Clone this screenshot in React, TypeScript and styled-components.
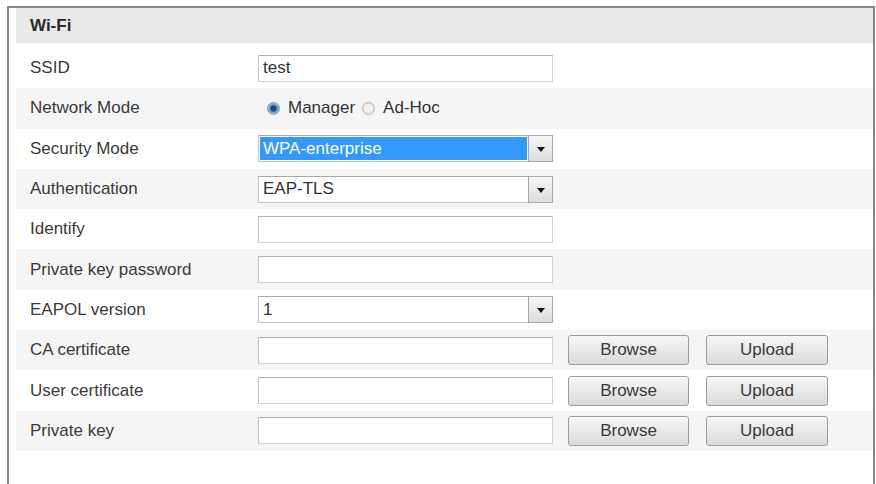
import React from "react";
import styled, { createGlobalStyle } from "styled-components";

const GlobalStyle = createGlobalStyle`
  html, body {
    margin: 0;
    padding: 0;
    background: #ffffff;
    overflow: hidden;
  }
  body {
    font-family: "Liberation Sans", Arial, sans-serif;
    color: #363636;
  }
`;

const Panel = styled.div`
  margin: 6px 1px 0 7px;
  min-height: 490px;
  border: 2px solid #868686;
  border-bottom: none;
  padding-left: 7px;
`;

const Header = styled.div`
  height: 35px;
  display: flex;
  align-items: center;
  padding-left: 14px;
  background: #e9e9e9;
  font-size: 17px;
  font-weight: bold;
  color: #2b2b2b;
`;

const Rows = styled.div`
  padding-top: 5px;
`;

const Row = styled.div<{ $shade: boolean }>`
  display: flex;
  align-items: center;
  height: 40.3px;
  background: ${(p) => (p.$shade ? "#f5f5f5" : "#ffffff")};
`;

const Label = styled.div`
  width: 242px;
  box-sizing: border-box;
  padding-left: 14px;
  font-size: 17px;
  color: #3a3a3a;
`;

const Field = styled.input`
  width: 295px;
  height: 27px;
  box-sizing: border-box;
  margin: 0;
  padding: 0 4px;
  border: 1px solid #d2d2d2;
  border-top-color: #b3b3b3;
  border-left-color: #c4c4c4;
  background: #ffffff;
  font-family: "Liberation Sans", Arial, sans-serif;
  font-size: 17px;
  color: #333;
  outline: none;
`;

const Select = styled.div`
  width: 295px;
  height: 27px;
  box-sizing: border-box;
  display: flex;
  border: 1px solid #c2c2c2;
  border-top-color: #a9a9a9;
  background: #ffffff;
`;

const SelectValue = styled.div<{ $highlight?: boolean }>`
  flex: 1;
  margin: 1px;
  padding-left: 3px;
  display: flex;
  align-items: center;
  font-size: 17px;
  background: ${(p) => (p.$highlight ? "#3399ff" : "transparent")};
  color: ${(p) => (p.$highlight ? "#ffffff" : "#333333")};
`;

const SelectArrow = styled.div`
  width: 25px;
  box-sizing: border-box;
  border: 1px solid #a8a8a8;
  margin: -1px -1px -1px 0;
  background: linear-gradient(#f8f8f8, #dcdcdc);
  display: flex;
  align-items: center;
  justify-content: center;

  &::after {
    content: "";
    border-left: 4px solid transparent;
    border-right: 4px solid transparent;
    border-top: 5px solid #111;
    margin-top: 2px;
  }
`;

const RadioGroup = styled.div`
  display: flex;
  align-items: center;
  padding-left: 9px;
  font-size: 17px;
  color: #333;
`;

const RadioDot = styled.span<{ $checked?: boolean }>`
  width: 13px;
  height: 13px;
  box-sizing: border-box;
  border-radius: 50%;
  border: 1px solid ${(p) => (p.$checked ? "#7f9bb3" : "#b9b9b9")};
  background: ${(p) =>
    p.$checked
      ? "radial-gradient(circle, #1e4a73 0 2.5px, #5d8fbb 3.5px, #b9d0e4 6px)"
      : "radial-gradient(circle, #f2f2f2 0 3px, #dcdcdc 6px)"};
  margin-right: 8px;
`;

const RadioText = styled.span`
  margin-right: 7px;
`;

const Button = styled.button<{ $gap: number; $width: number }>`
  width: ${(p) => p.$width}px;
  height: 30px;
  margin: 0 0 0 ${(p) => p.$gap}px;
  padding: 0;
  border: 1px solid #9c9c9c;
  border-radius: 3px;
  background: linear-gradient(#f7f7f7, #dadada);
  font-family: "Liberation Sans", Arial, sans-serif;
  font-size: 17px;
  color: #3a3a3a;
`;

type Control =
  | { kind: "text"; value?: string; files?: boolean }
  | { kind: "select"; value: string; highlight?: boolean }
  | { kind: "radio" };

const rows: { label: string; control: Control }[] = [
  { label: "SSID", control: { kind: "text", value: "test" } },
  { label: "Network Mode", control: { kind: "radio" } },
  {
    label: "Security Mode",
    control: { kind: "select", value: "WPA-enterprise", highlight: true },
  },
  { label: "Authentication", control: { kind: "select", value: "EAP-TLS" } },
  { label: "Identify", control: { kind: "text" } },
  { label: "Private key password", control: { kind: "text" } },
  { label: "EAPOL version", control: { kind: "select", value: "1" } },
  { label: "CA certificate", control: { kind: "text", files: true } },
  { label: "User certificate", control: { kind: "text", files: true } },
  { label: "Private key", control: { kind: "text", files: true } },
];

function renderControl(c: Control) {
  if (c.kind === "radio") {
    return (
      <RadioGroup>
        <RadioDot $checked />
        <RadioText>Manager</RadioText>
        <RadioDot />
        <RadioText>Ad-Hoc</RadioText>
      </RadioGroup>
    );
  }
  if (c.kind === "select") {
    return (
      <Select>
        <SelectValue $highlight={c.highlight}>{c.value}</SelectValue>
        <SelectArrow />
      </Select>
    );
  }
  return (
    <>
      <Field readOnly value={c.value || ""} />
      {c.files ? (
        <>
          <Button $gap={15} $width={121}>
            Browse
          </Button>
          <Button $gap={17} $width={122}>
            Upload
          </Button>
        </>
      ) : null}
    </>
  );
}

function App() {
  return (
    <>
      <GlobalStyle />
      <Panel>
        <Header>Wi-Fi</Header>
        <Rows>
          {rows.map((row, i) => (
            <Row key={row.label} $shade={i % 2 === 1}>
              <Label>{row.label}</Label>
              {renderControl(row.control)}
            </Row>
          ))}
        </Rows>
      </Panel>
    </>
  );
}

export default App;
